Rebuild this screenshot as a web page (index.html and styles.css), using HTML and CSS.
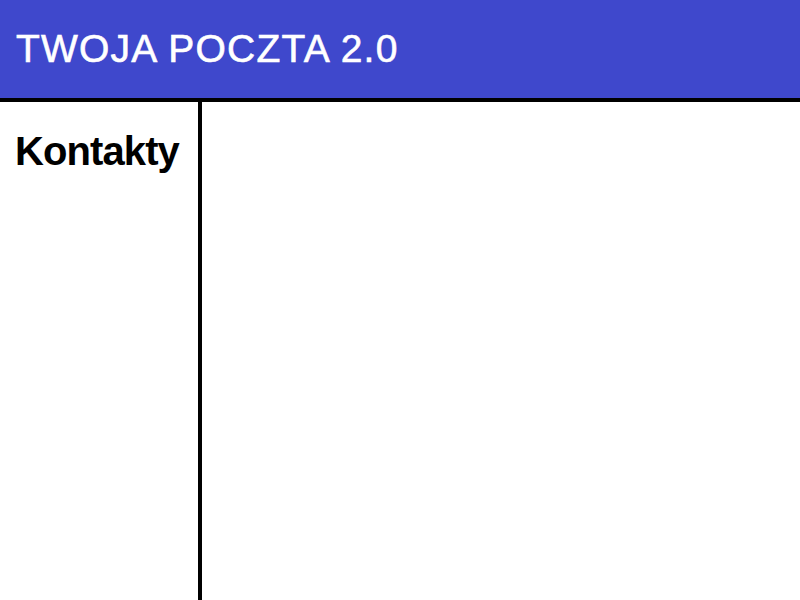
FILE: index.html
```html
<!DOCTYPE html>
<html lang="pl">
<head>
<meta charset="utf-8">
<title>Twoja Poczta 2.0</title>
<link rel="stylesheet" href="styles.css">
</head>
<body>
<header class="topbar">
  <h1 class="title">TWOJA POCZTA 2.0</h1>
</header>
<div class="main">
  <aside class="sidebar">
    <h2 class="sidebar-title">Kontakty</h2>
  </aside>
  <section class="content"></section>
</div>
</body>
</html>
```
FILE: styles.css
```css
html, body {
  margin: 0;
  padding: 0;
  background: #ffffff;
}
body {
  width: 800px;
  height: 600px;
  overflow: hidden;
  display: flex;
  flex-direction: column;
}
.topbar {
  height: 98px;
  background: #3f48cc;
  border-bottom: 4px solid #000000;
  display: flex;
  align-items: center;
  padding-left: 16px;
  flex: none;
}
.title {
  margin: 0;
  font-family: "Liberation Sans", Arial, sans-serif;
  font-size: 39px;
  font-weight: normal;
  letter-spacing: 1.2px;
  color: #ffffff;
  line-height: normal;
  -webkit-text-stroke: 0.6px #ffffff;
}
.main {
  flex: 1;
  display: flex;
}
.sidebar {
  width: 198px;
  border-right: 4px solid #000000;
  flex: none;
}
.sidebar-title {
  margin: 0;
  padding: 27px 0 0 15px;
  font-family: "Liberation Sans", Arial, sans-serif;
  font-size: 40px;
  font-weight: bold;
  letter-spacing: -0.9px;
  color: #000000;
  line-height: normal;
}
.content {
  flex: 1;
}
```
